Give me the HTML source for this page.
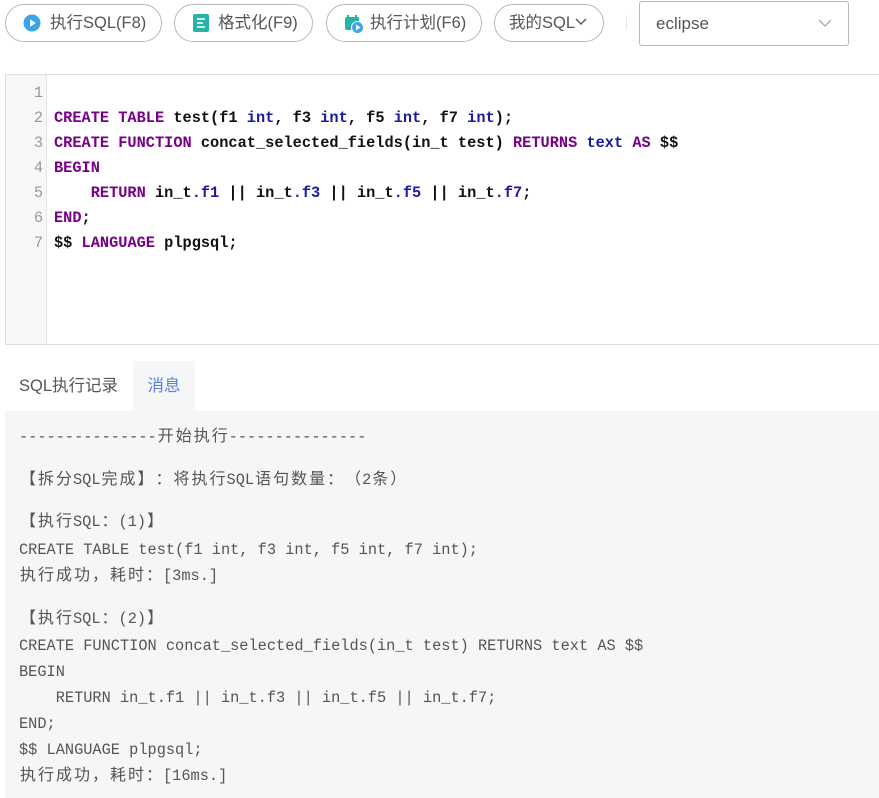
<!DOCTYPE html>
<html><head><meta charset="utf-8"><style>
*{box-sizing:border-box;margin:0;padding:0}
body{width:879px;height:798px;background:#fff;position:relative;overflow:hidden;font-family:"Liberation Sans","Noto Sans CJK SC",sans-serif;color:#444}
.btn{position:absolute;top:4px;height:38px;border:1px solid #b8b8c0;border-radius:19px;font-size:16.5px;line-height:36px;color:#555;padding-left:14px;white-space:nowrap}
.btn svg{position:absolute;top:9px;left:17px}
.sel{position:absolute;left:639px;top:1px;width:210px;height:45px;border:1px solid #b8b8c0;border-radius:3px;font-size:17px;line-height:43px;padding-left:16px;color:#555}
.ed{position:absolute;left:5px;top:74px;width:874px;height:271px;border:1px solid #ddd;border-right:none}
.gut{position:absolute;left:0;top:0;width:41px;height:269px;background:#f7f7f7;border-right:1px solid #e5e5e5}
.ln{position:absolute;left:0;width:37px;text-align:right;font-family:"Liberation Mono",monospace;font-size:15.3px;color:#999;line-height:25px}
.cl{position:absolute;left:48px;font-family:"Liberation Mono",monospace;font-size:15.3px;font-weight:bold;color:#111;line-height:25px;white-space:pre}
.k{color:#770088}.t{color:#1a1aa6}
.tab{position:absolute;top:361px;height:50px;line-height:50px;font-size:16.5px}
.msg{position:absolute;left:5px;top:411px;width:874px;height:387px;background:#f5f6f8}
.m{position:absolute;left:14px;font-family:"Liberation Mono","Noto Sans CJK SC",monospace;font-size:15.3px;color:#555;line-height:26px;height:26px;white-space:pre}
.c{font-family:"Noto Sans CJK SC",sans-serif;font-size:16px;display:inline-block;width:18px;text-align:center;line-height:26px;vertical-align:top;position:relative;top:-3px}
</style></head><body>
<div class="btn" style="left:5px;width:157px;padding-left:44px"><svg width="18" height="18" viewBox="0 0 18 18"><circle cx="9" cy="9" r="8.5" fill="#3aa6ea"/><path d="M7 5.2v7.6L12.8 9z" fill="#fff"/></svg>执行SQL(F8)</div>
<div class="btn" style="left:174px;width:139px;padding-left:43px"><svg width="18" height="18" viewBox="0 0 18 18"><rect x="1" y="0" width="16" height="18" rx="2" fill="#27b3a6"/><path d="M5 5h8M5 9h6M5 13h8" stroke="#fff" stroke-width="1.6"/></svg>格式化(F9)</div>
<div class="btn" style="left:326px;width:156px;padding-left:43px"><svg width="20" height="20" viewBox="0 0 20 20"><rect x="1" y="3" width="14" height="13" rx="2" fill="#27b3a6"/><path d="M4 1v4M12 1v4" stroke="#27b3a6" stroke-width="2"/><circle cx="13.5" cy="13.5" r="6" fill="#3aa6ea" stroke="#fff"/><path d="M12 10.5v6l4.5-3z" fill="#fff"/></svg>执行计划(F6)</div>
<div class="btn" style="left:494px;width:110px">我的SQL<svg style="position:static;vertical-align:middle;margin-top:-4px" width="12" height="8" viewBox="0 0 12 8"><path d="M1 1l5 5 5-5" fill="none" stroke="#555" stroke-width="1.4"/></svg></div>
<div style="position:absolute;left:626px;top:15px;width:1px;height:15px;background:#e5e5e5"></div>
<div class="sel">eclipse<svg style="position:absolute;right:16px;top:17px" width="14" height="9" viewBox="0 0 14 9"><path d="M1 1l6 6 6-6" fill="none" stroke="#aaa" stroke-width="1.3"/></svg></div>
<div class="ed"><div class="gut">
<div class="ln" style="top:6px">1</div><div class="ln" style="top:31px">2</div><div class="ln" style="top:56px">3</div><div class="ln" style="top:81px">4</div><div class="ln" style="top:106px">5</div><div class="ln" style="top:131px">6</div><div class="ln" style="top:156px">7</div></div>
<div class="cl" style="top:31px"><span class="k">CREATE TABLE</span> test(f1 <span class="t">int</span>, f3 <span class="t">int</span>, f5 <span class="t">int</span>, f7 <span class="t">int</span>);</div>
<div class="cl" style="top:56px"><span class="k">CREATE FUNCTION</span> concat_selected_fields(in_t test) <span class="k">RETURNS</span> <span class="t">text</span> <span class="k">AS</span> $$</div>
<div class="cl" style="top:81px"><span class="k">BEGIN</span></div>
<div class="cl" style="top:106px">    <span class="k">RETURN</span> in_t<span class="t">.f1</span> || in_t<span class="t">.f3</span> || in_t<span class="t">.f5</span> || in_t<span class="t">.f7</span>;</div>
<div class="cl" style="top:131px"><span class="k">END</span>;</div>
<div class="cl" style="top:156px">$$ <span class="k">LANGUAGE</span> plpgsql;</div>
</div>
<div class="tab" style="left:19px;color:#555">SQL执行记录</div>
<div class="tab" style="left:133px;width:62px;background:#f5f6f8;text-align:center;color:#5b7fe6">消息</div>
<div class="msg">
<div class="m" style="top:13px">---------------<span class="c">开</span><span class="c">始</span><span class="c">执</span><span class="c">行</span>---------------</div>
<div class="m" style="top:56px"><span class="c">【</span><span class="c">拆</span><span class="c">分</span>SQL<span class="c">完</span><span class="c">成</span><span class="c">】</span><span class="c">：</span><span class="c">将</span><span class="c">执</span><span class="c">行</span>SQL<span class="c">语</span><span class="c">句</span><span class="c">数</span><span class="c">量</span><span class="c">：</span><span class="c">（</span>2<span class="c">条</span><span class="c">）</span></div>
<div class="m" style="top:98px"><span class="c">【</span><span class="c">执</span><span class="c">行</span>SQL<span class="c">：</span>(1)<span class="c">】</span></div>
<div class="m" style="top:126px">CREATE TABLE test(f1 int, f3 int, f5 int, f7 int);</div>
<div class="m" style="top:152px"><span class="c">执</span><span class="c">行</span><span class="c">成</span><span class="c">功</span><span class="c">，</span><span class="c">耗</span><span class="c">时</span><span class="c">：</span>[3ms.]</div>
<div class="m" style="top:195px"><span class="c">【</span><span class="c">执</span><span class="c">行</span>SQL<span class="c">：</span>(2)<span class="c">】</span></div>
<div class="m" style="top:222px">CREATE FUNCTION concat_selected_fields(in_t test) RETURNS text AS $$</div>
<div class="m" style="top:248px">BEGIN</div>
<div class="m" style="top:274px">    RETURN in_t.f1 || in_t.f3 || in_t.f5 || in_t.f7;</div>
<div class="m" style="top:300px">END;</div>
<div class="m" style="top:326px">$$ LANGUAGE plpgsql;</div>
<div class="m" style="top:352px"><span class="c">执</span><span class="c">行</span><span class="c">成</span><span class="c">功</span><span class="c">，</span><span class="c">耗</span><span class="c">时</span><span class="c">：</span>[16ms.]</div>
</div>
</body></html>
